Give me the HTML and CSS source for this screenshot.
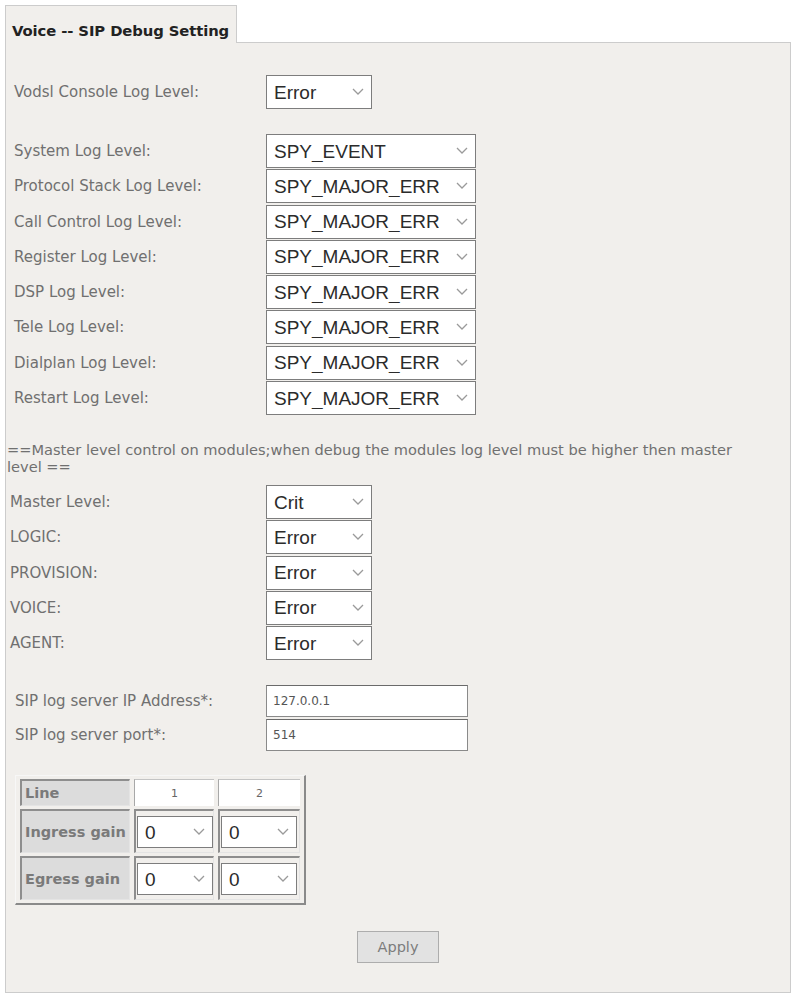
FILE: index.html
```html
<!DOCTYPE html>
<html lang="en">
<head>
    <meta charset="UTF-8">
    <meta name="viewport" content="width=device-width, initial-scale=1.0">
    <title>Voice -- SIP Debug Setting</title>
    <link rel="stylesheet" href="styles.css">
</head>
<body>
    <div class="page">
        <div class="tab-bar">
            <div class="tab">Voice -- SIP Debug Setting</div>
            <div class="tab-fill"></div>
        </div>

        <form class="panel" onsubmit="return false;">
            <div class="form-grid console">
                <label>Vodsl Console Log Level:</label>
                <div class="pick short">
                    <select><option>Error</option></select>
                    <svg viewBox="0 0 12 7"><path d="M1 1l5 5 5-5"/></svg>
                </div>
            </div>

            <div class="form-grid levels">
                <label>System Log Level:</label>
                <div class="pick wide">
                    <select><option>SPY_EVENT</option></select>
                    <svg viewBox="0 0 12 7"><path d="M1 1l5 5 5-5"/></svg>
                </div>
                <label>Protocol Stack Log Level:</label>
                <div class="pick wide">
                    <select><option>SPY_MAJOR_ERR</option></select>
                    <svg viewBox="0 0 12 7"><path d="M1 1l5 5 5-5"/></svg>
                </div>
                <label>Call Control Log Level:</label>
                <div class="pick wide">
                    <select><option>SPY_MAJOR_ERR</option></select>
                    <svg viewBox="0 0 12 7"><path d="M1 1l5 5 5-5"/></svg>
                </div>
                <label>Register Log Level:</label>
                <div class="pick wide">
                    <select><option>SPY_MAJOR_ERR</option></select>
                    <svg viewBox="0 0 12 7"><path d="M1 1l5 5 5-5"/></svg>
                </div>
                <label>DSP Log Level:</label>
                <div class="pick wide">
                    <select><option>SPY_MAJOR_ERR</option></select>
                    <svg viewBox="0 0 12 7"><path d="M1 1l5 5 5-5"/></svg>
                </div>
                <label>Tele Log Level:</label>
                <div class="pick wide">
                    <select><option>SPY_MAJOR_ERR</option></select>
                    <svg viewBox="0 0 12 7"><path d="M1 1l5 5 5-5"/></svg>
                </div>
                <label>Dialplan Log Level:</label>
                <div class="pick wide">
                    <select><option>SPY_MAJOR_ERR</option></select>
                    <svg viewBox="0 0 12 7"><path d="M1 1l5 5 5-5"/></svg>
                </div>
                <label>Restart Log Level:</label>
                <div class="pick wide">
                    <select><option>SPY_MAJOR_ERR</option></select>
                    <svg viewBox="0 0 12 7"><path d="M1 1l5 5 5-5"/></svg>
                </div>
            </div>

            <p class="note">==Master level control on modules;when debug the modules log level must be higher then master level ==</p>

            <div class="form-grid modules">
                <label>Master Level:</label>
                <div class="pick short">
                    <select><option>Crit</option></select>
                    <svg viewBox="0 0 12 7"><path d="M1 1l5 5 5-5"/></svg>
                </div>
                <label>LOGIC:</label>
                <div class="pick short">
                    <select><option>Error</option></select>
                    <svg viewBox="0 0 12 7"><path d="M1 1l5 5 5-5"/></svg>
                </div>
                <label>PROVISION:</label>
                <div class="pick short">
                    <select><option>Error</option></select>
                    <svg viewBox="0 0 12 7"><path d="M1 1l5 5 5-5"/></svg>
                </div>
                <label>VOICE:</label>
                <div class="pick short">
                    <select><option>Error</option></select>
                    <svg viewBox="0 0 12 7"><path d="M1 1l5 5 5-5"/></svg>
                </div>
                <label>AGENT:</label>
                <div class="pick short">
                    <select><option>Error</option></select>
                    <svg viewBox="0 0 12 7"><path d="M1 1l5 5 5-5"/></svg>
                </div>
            </div>

            <div class="form-grid server">
                <label>SIP log server IP Address*:</label>
                <input type="text" value="127.0.0.1">
                <label>SIP log server port*:</label>
                <input type="text" value="514">
            </div>

            <table class="gain">
                <tr class="line-row">
                    <th>Line</th>
                    <td>1</td>
                    <td>2</td>
                </tr>
                <tr class="gain-row">
                    <th>Ingress gain</th>
                    <td>
                        <div class="pick cell">
                            <select><option>0</option></select>
                            <svg viewBox="0 0 12 7"><path d="M1 1l5 5 5-5"/></svg>
                        </div>
                    </td>
                    <td>
                        <div class="pick cell">
                            <select><option>0</option></select>
                            <svg viewBox="0 0 12 7"><path d="M1 1l5 5 5-5"/></svg>
                        </div>
                    </td>
                </tr>
                <tr class="gain-row">
                    <th>Egress gain</th>
                    <td>
                        <div class="pick cell">
                            <select><option>0</option></select>
                            <svg viewBox="0 0 12 7"><path d="M1 1l5 5 5-5"/></svg>
                        </div>
                    </td>
                    <td>
                        <div class="pick cell">
                            <select><option>0</option></select>
                            <svg viewBox="0 0 12 7"><path d="M1 1l5 5 5-5"/></svg>
                        </div>
                    </td>
                </tr>
            </table>

            <div class="actions">
                <button type="submit" class="apply-btn">Apply</button>
            </div>
        </form>
    </div>
</body>
</html>
```

FILE: styles.css
```css
body {
    margin: 0;
    padding-top: 5px;
    background-color: #ffffff;
    font-family: "DejaVu Sans", Verdana, sans-serif;
    font-size: 15px;
    color: #707070;
}

.page {
    margin-left: 5px;
    width: 786px;
}

/* tab strip on top of the panel */
.tab-bar {
    display: flex;
    height: 38px;
}

.tab {
    width: 232px;
    box-sizing: border-box;
    padding: 16px 0 0 6px;
    border: 1px solid #cccccc;
    border-bottom: none;
    background-color: #f1efec;
    font-weight: bold;
    font-size: 14.8px;
    letter-spacing: -0.1px;
    color: #222222;
    white-space: nowrap;
}

.tab-fill {
    flex: 1;
    border-bottom: 1px solid #cccccc;
}

.panel {
    display: block;
    margin: 0;
    padding: 32px 0 29px 0;
    border: 1px solid #cccccc;
    border-top: none;
    background-color: #f1efec;
}

.form-grid {
    display: grid;
    grid-template-columns: 252px auto;
    row-gap: 1.3px;
    align-items: center;
    justify-content: start;
    padding-left: 8px;
}

.console {
    margin-bottom: 25px;
}

.modules {
    padding-left: 4px;
    grid-template-columns: 256px auto;
}

.server {
    padding-left: 9px;
    grid-template-columns: 251px auto;
    row-gap: 2px;
    margin-top: 25px;
}

.note {
    margin: 26px 0 10px 0;
    padding-left: 1px;
    padding-right: 30px;
    line-height: 17px;
    font-size: 14.6px;
}

/* selects with a thin chevron on the right */
.pick {
    position: relative;
    height: 34px;
}

.pick.short {
    width: 106px;
}

.pick.wide {
    width: 210px;
}

.pick.cell {
    width: 76px;
    height: 32px;
}

.pick select {
    appearance: none;
    -webkit-appearance: none;
    width: 100%;
    height: 100%;
    margin: 0;
    padding: 0 0 0 7px;
    border: 1px solid #7d7d7d;
    border-radius: 0;
    background-color: #ffffff;
    font-family: "Liberation Sans", Arial, sans-serif;
    font-size: 19px;
    color: #2b2b2b;
}

.pick svg {
    position: absolute;
    right: 8px;
    top: 50%;
    width: 12px;
    height: 7px;
    margin-top: -4px;
    fill: none;
    stroke: #9a9a9a;
    stroke-width: 1.3;
    pointer-events: none;
}

.server input {
    width: 202px;
    height: 32px;
    box-sizing: border-box;
    margin: 0;
    padding: 0 6px;
    border: 1px solid #8a8a8a;
    border-top-color: #6a6a6a;
    background-color: #ffffff;
    font-family: "DejaVu Sans", Verdana, sans-serif;
    font-size: 12px;
    color: #555555;
}

/* line gain table */
.gain {
    margin: 24px 0 0 9px;
    border-collapse: separate;
    border-spacing: 4px 3px;
    border-top: 1px solid #f7f7f7;
    border-left: 1px solid #f7f7f7;
    border-right: 2px solid #8a8a8a;
    border-bottom: 2px solid #8a8a8a;
}

.gain th {
    width: 110px;
    box-sizing: border-box;
    padding: 0 0 0 3px;
    border-top: 2px solid #8e8e8e;
    border-left: 2px solid #8e8e8e;
    border-right: 1px solid #e4e4e4;
    border-bottom: 1px solid #e4e4e4;
    background-color: #dcdcdc;
    text-align: left;
    font-size: 14.5px;
    color: #7a7a7a;
    white-space: nowrap;
}

.gain td {
    box-sizing: border-box;
    padding: 0;
}

.gain td:nth-child(2) {
    width: 80px;
}

.gain td:nth-child(3) {
    width: 82px;
}

.line-row th,
.line-row td {
    height: 27px;
}

.line-row td {
    border-top: 1px solid #c4c4c4;
    border-left: 1px solid #a8a8a8;
    background-color: #ffffff;
    text-align: center;
    font-size: 11px;
    color: #666666;
}

.gain-row th,
.gain-row td {
    height: 44px;
}

.gain-row td {
    padding: 1px 0 0 1px;
    border-top: 2px solid #8e8e8e;
    border-left: 2px solid #8e8e8e;
    border-right: 1px solid #e4e4e4;
    border-bottom: 1px solid #e4e4e4;
}

.actions {
    display: flex;
    justify-content: center;
    margin-top: 26px;
}

.apply-btn {
    width: 82px;
    height: 32px;
    border: 1px solid #adadad;
    border-radius: 0;
    background-color: #e2e2e2;
    font-family: "DejaVu Sans", Verdana, sans-serif;
    font-size: 14.5px;
    color: #7c7c7c;
}
```
